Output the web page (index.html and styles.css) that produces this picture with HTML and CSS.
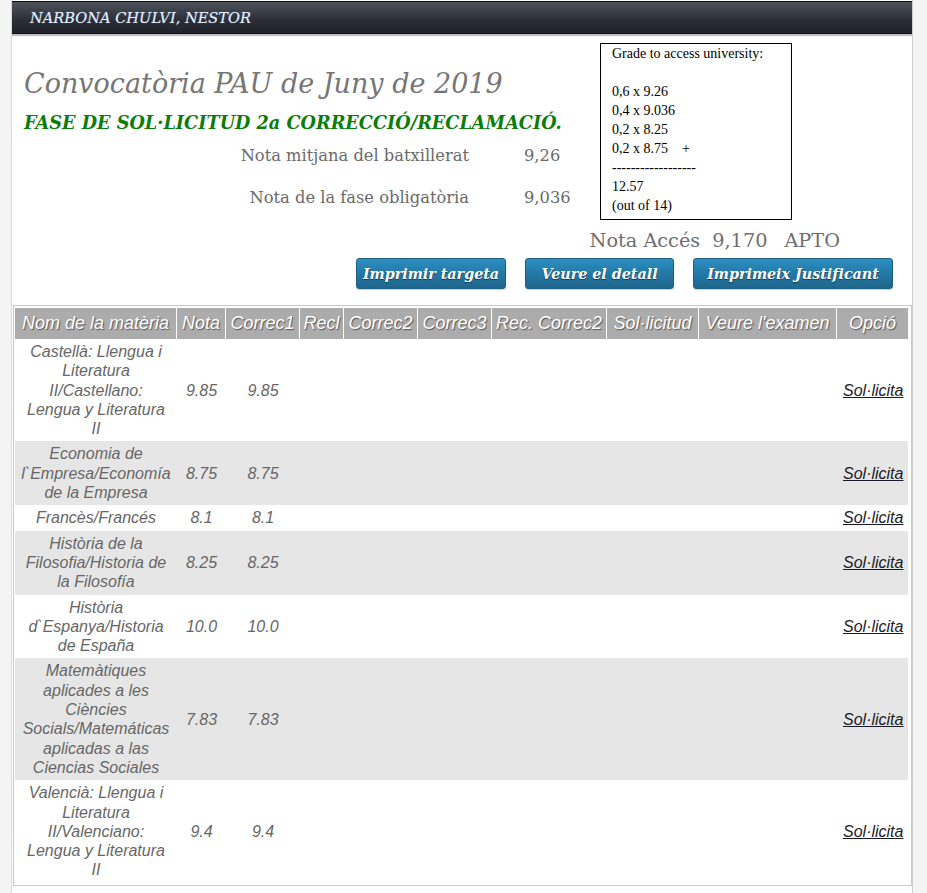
FILE: index.html
```html
<!DOCTYPE html>
<html lang="ca">
<head>
<meta charset="utf-8">
<title>Convocatòria PAU</title>
<link rel="stylesheet" href="styles.css">
</head>
<body>
<div class="page">
  <div class="topbar">NARBONA CHULVI, NESTOR</div>
  <div class="top">
    <div class="intro">
      <h1 class="title">Convocatòria PAU de Juny de 2019</h1>
      <h2 class="phase">FASE DE SOL·LICITUD 2a CORRECCIÓ/RECLAMACIÓ.</h2>
      <div class="stats">
        <span class="label">Nota mitjana del batxillerat</span><span class="value">9,26</span>
        <span class="label">Nota de la fase obligatòria</span><span class="value">9,036</span>
      </div>
    </div>
    <div class="calc">
      Grade to access university:<br><br>
      0,6 x 9.26<br>
      0,4 x 9.036<br>
      0,2 x 8.25<br>
      0,2 x 8.75&nbsp;&nbsp;&nbsp; +<br>
      ------------------<br>
      12.57<br>
      (out of 14)
    </div>
  </div>
  <div class="access"><span>Nota Accés</span><span>9,170</span><span class="apto">APTO</span></div>
  <div class="actions">
    <button class="btn b1">Imprimir targeta</button>
    <button class="btn b2">Veure el detall</button>
    <button class="btn b3">Imprimeix Justificant</button>
  </div>
  <div class="table-wrap">
    <table class="grades">
      <colgroup>
        <col class="c1"><col class="c2"><col class="c3"><col class="c4"><col class="c5">
        <col class="c6"><col class="c7"><col class="c8"><col class="c9"><col class="c10">
      </colgroup>
      <thead>
        <tr>
          <th>Nom de la matèria</th><th>Nota</th><th>Correc1</th><th>Recl</th><th>Correc2</th>
          <th>Correc3</th><th>Rec. Correc2</th><th>Sol·licitud</th><th>Veure l'examen</th><th>Opció</th>
        </tr>
      </thead>
      <tbody>
        <tr><td>Castellà: Llengua i Literatura II/Castellano: Lengua y Literatura II</td><td>9.85</td><td>9.85</td><td></td><td></td><td></td><td></td><td></td><td></td><td><a href="#">Sol·licita</a></td></tr>
        <tr class="alt"><td>Economia de l`Empresa/Economía de la Empresa</td><td>8.75</td><td>8.75</td><td></td><td></td><td></td><td></td><td></td><td></td><td><a href="#">Sol·licita</a></td></tr>
        <tr><td>Francès/Francés</td><td>8.1</td><td>8.1</td><td></td><td></td><td></td><td></td><td></td><td></td><td><a href="#">Sol·licita</a></td></tr>
        <tr class="alt"><td>Història de la Filosofia/Historia de la Filosofía</td><td>8.25</td><td>8.25</td><td></td><td></td><td></td><td></td><td></td><td></td><td><a href="#">Sol·licita</a></td></tr>
        <tr><td>Història d`Espanya/Historia de España</td><td>10.0</td><td>10.0</td><td></td><td></td><td></td><td></td><td></td><td></td><td><a href="#">Sol·licita</a></td></tr>
        <tr class="alt"><td>Matemàtiques aplicades a les Ciències Socials/Matemáticas aplicadas a las Ciencias Sociales</td><td>7.83</td><td>7.83</td><td></td><td></td><td></td><td></td><td></td><td></td><td><a href="#">Sol·licita</a></td></tr>
        <tr><td>Valencià: Llengua i Literatura II/Valenciano: Lengua y Literatura II</td><td>9.4</td><td>9.4</td><td></td><td></td><td></td><td></td><td></td><td></td><td><a href="#">Sol·licita</a></td></tr>
      </tbody>
    </table>
  </div>
</div>
</body>
</html>
```

FILE: styles.css
```css
html, body {
  margin: 0;
  padding: 0;
}
body {
  background: #f4f4f4;
  font-family: "DejaVu Serif", serif;
}
.page {
  margin-left: 11px;
  width: 900px;
  background: #fff;
  border-left: 1px solid #dcdcdc;
  border-right: 1px solid #cfcfcf;
  padding-top: 1px;
  min-height: 892px;
}
.topbar {
  height: 31px;
  border-top: 1px solid #0c0c0e;
  border-bottom: 1px solid #111;
  background: linear-gradient(#4d525d, #2a2d34 60%, #202329);
  box-shadow: 0 2px 1px #bfbfbf;
  color: #e6eefa;
  font-style: italic;
  font-size: 14.6px;
  line-height: 31px;
  padding-left: 18px;
  text-shadow: 0 0 1px #6a90c0;
}
.top {
  display: grid;
  grid-template-columns: 588px 192px;
}
.intro {
  padding-left: 12px;
}
.title {
  margin: 30px 0 0;
  font-size: 27px;
  font-weight: normal;
  font-style: italic;
  color: #767676;
  line-height: 40px;
}
.phase {
  margin: 8px 0 0;
  font-size: 17.7px;
  font-style: italic;
  font-weight: bold;
  color: #0a7d0a;
  line-height: 22px;
}
.stats {
  display: grid;
  grid-template-columns: 445px auto;
  column-gap: 55px;
  row-gap: 20px;
  margin-top: 11px;
  color: #6a6a6a;
  font-size: 16.3px;
  line-height: 22px;
}
.stats .label {
  text-align: right;
}
.calc {
  margin-top: 9px;
  border: 1px solid #000;
  padding: 0 0 4px 11px;
  font-family: "Liberation Serif", serif;
  font-size: 14px;
  line-height: 19px;
  color: #000;
}
.access {
  display: flex;
  justify-content: flex-end;
  gap: 12px;
  padding-right: 72px;
  margin-top: 8px;
  font-size: 19.3px;
  line-height: 26px;
  color: #6e6e6e;
}
.access .apto {
  margin-left: 5px;
}
.actions {
  display: flex;
  justify-content: flex-end;
  gap: 19px;
  padding-right: 19px;
  margin-top: 4px;
}
.btn {
  height: 31px;
  border: 1px solid #1d5f80;
  border-radius: 3px;
  background: linear-gradient(#2c8fc1, #2377a3 55%, #1f668c);
  color: #fff;
  font-family: "DejaVu Serif", serif;
  font-style: italic;
  font-weight: bold;
  font-size: 14.3px;
  padding: 0;
  text-shadow: 0 1px 1px #123b52;
  box-shadow: 0 1px 1px #c7d3dc;
}
.b1 { width: 150px; }
.b2 { width: 149px; }
.b3 { width: 200px; }
.table-wrap {
  margin-top: 16px;
  margin-left: 1px;
  width: 893px;
  border: 1px solid #cbcbcb;
  padding: 2px 3px 2px 1px;
}
.grades {
  width: 893px;
  table-layout: fixed;
  border-collapse: separate;
  border-spacing: 0;
  font-family: "Liberation Sans", Arial, sans-serif;
  font-style: italic;
}
.c1 { width: 162px; }
.c2 { width: 49px; }
.c3 { width: 74px; }
.c4 { width: 44px; }
.c5 { width: 74px; }
.c6 { width: 74px; }
.c7 { width: 115px; }
.c8 { width: 92px; }
.c9 { width: 138px; }
.c10 { width: 71px; }
.grades th {
  background: #acacac;
  color: #fff;
  font-weight: normal;
  font-size: 18px;
  line-height: 21px;
  padding: 5px 0;
  border-right: 1px solid #fff;
  text-shadow: 1px 1px 1px #555;
  white-space: nowrap;
  overflow: hidden;
}
.grades th:last-child {
  border-right: none;
}
.grades td {
  color: #666;
  font-size: 16px;
  line-height: 19.3px;
  padding: 3px 6px;
  text-align: center;
  vertical-align: middle;
}
.grades tr.alt td {
  background: #e6e6e6;
}
.grades a {
  color: #1a1a2a;
  text-decoration: underline;
}
```
